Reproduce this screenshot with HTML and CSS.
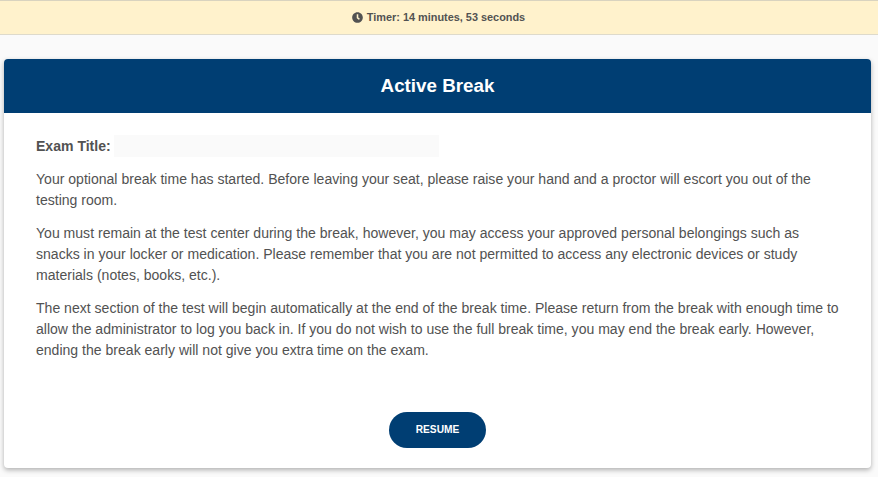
FILE: index.html
```html
<!DOCTYPE html>
<html lang="en">
<head>
<meta charset="utf-8">
<title>Active Break</title>
<link rel="stylesheet" href="styles.css">
</head>
<body>
<div class="timer" role="status">
  <svg class="timer-icon" viewBox="0 0 512 512" aria-hidden="true"><path d="M256 8C119 8 8 119 8 256s111 248 248 248 248-111 248-248S393 8 256 8zm57 350-88-64c-3-2-5-6-5-10V116c0-7 5-12 12-12h48c7 0 12 5 12 12v138l66 48c5 4 6 11 3 16l-29 39c-4 5-12 6-19 1z"/></svg>
  <span>Timer: 14 minutes, 53 seconds</span>
</div>
<main class="card">
  <h1 class="card-title">Active Break</h1>
  <div class="card-body">
    <div class="exam"><strong>Exam Title:</strong><span class="exam-value"></span></div>
    <p>Your optional break time has started. Before leaving your seat, please raise your hand and a proctor will escort you out of the<br>testing room.</p>
    <p>You must remain at the test center during the break, however, you may access your approved personal belongings such as<br>snacks in your locker or medication. Please remember that you are not permitted to access any electronic devices or study<br>materials (notes, books, etc.).</p>
    <p>The next section of the test will begin automatically at the end of the break time. Please return from the break with enough time to<br>allow the administrator to log you back in. If you do not wish to use the full break time, you may end the break early. However,<br>ending the break early will not give you extra time on the exam.</p>
    <button class="resume" type="button">RESUME</button>
  </div>
</main>
</body>
</html>
```
FILE: styles.css
```css
* { box-sizing: border-box; }
body {
  margin: 0;
  height: 477px;
  overflow: hidden;
  background: #fafafa;
  color: #525252;
  font: 14.05px/21px "Liberation Sans", Arial, sans-serif;
}
.timer {
  display: flex;
  align-items: center;
  justify-content: center;
  gap: 4px;
  height: 35px;
  padding-right: 1px;
  border-top: 1px solid #d9d3bf;
  border-bottom: 1px solid #dedacb;
  background: #fff2cc;
  font-size: 10.9px;
  font-weight: bold;
}
.timer-icon { width: 11px; height: 11px; fill: currentColor; }
.card {
  height: 409px;
  margin: 24px 7px 0 4px;
  border-radius: 4px;
  background: #fff;
  box-shadow: 0 2px 5px rgba(0, 0, 0, .3);
  overflow: hidden;
}
.card-title {
  height: 54px;
  margin: 0;
  background: #003e73;
  color: #fff;
  font-size: 18.8px;
  line-height: 54px;
  text-align: center;
}
.card-body { padding: 22px 32px 0; }
.exam { display: flex; align-items: center; height: 22px; margin-bottom: 12px; }
.exam-value { width: 325px; height: 22px; margin-left: 3px; background: #fafafa; }
p { margin: 0 0 12px; white-space: nowrap; }
.resume {
  display: block;
  width: 97px;
  height: 36px;
  margin: 51px auto 0;
  padding: 0 0 1px;
  border: 0;
  border-radius: 18px;
  background: #003e73;
  color: #fff;
  font: bold 10.2px "Liberation Sans", Arial, sans-serif;
}
```
